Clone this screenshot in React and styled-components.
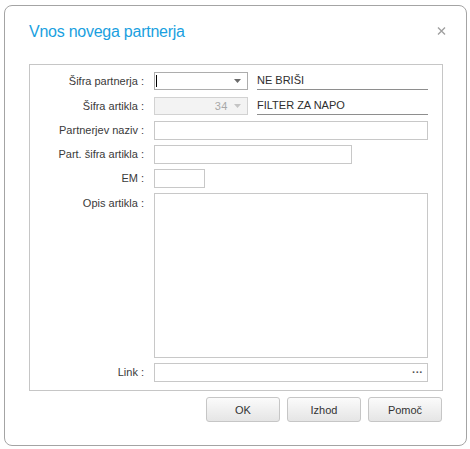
import styled, { createGlobalStyle } from 'styled-components';

const GlobalStyle = createGlobalStyle`
  html, body {
    margin: 0;
    background: #fff;
  }
  body {
    font-family: "Liberation Sans", Arial, sans-serif;
  }
`;

const Dialog = styled.div`
  box-sizing: border-box;
  width: 463px;
  height: 441px;
  margin: 5px 0 0 4px;
  padding: 0 23px 0 24px;
  border: 1px solid #a4a4a4;
  border-radius: 8px;
  background: #fff;
  display: flex;
  flex-direction: column;
`;

const Header = styled.div`
  display: flex;
  align-items: center;
  justify-content: space-between;
  padding-top: 16px;
  height: 20px;
  margin-bottom: 22px;
`;

const Title = styled.h1`
  margin: 0;
  font-size: 16px;
  line-height: 20px;
  font-weight: normal;
  letter-spacing: -0.25px;
  color: #1a9fe0;
`;

const Close = styled.svg`
  margin-right: -3px;
  margin-top: -2px;
`;

const Panel = styled.div`
  border: 1px solid #c6c6c6;
  padding: 7px 14px 8px 0;
  display: flex;
  flex-direction: column;
`;

const Row = styled.div`
  display: grid;
  grid-template-columns: 114px 1fr;
  column-gap: 10px;
  align-items: ${(p) => (p.$top ? 'start' : 'center')};
  margin-top: ${(p) => p.$mt || 0}px;
`;

const Label = styled.label`
  text-align: right;
  font-size: 11px;
  line-height: 13px;
  color: #3a3a3a;
  white-space: nowrap;
  padding-top: ${(p) => (p.$top ? 4 : 0)}px;
`;

const Field = styled.div`
  display: flex;
  align-items: flex-end;
`;

const Combo = styled.div`
  box-sizing: border-box;
  width: 94px;
  height: 18px;
  border: 1px solid ${(p) => (p.$disabled ? '#d2d2d2' : '#adadad')};
  background: ${(p) => (p.$disabled ? '#f3f3f3' : '#fff')};
  display: flex;
  align-items: center;
  padding: 0 6px 0 1px;
  font-size: 11px;
  color: #a8a8a8;
`;

const Caret = styled.span`
  width: 1px;
  height: 12px;
  background: #000;
`;

const ComboValue = styled.span`
  flex: 1;
  text-align: right;
  padding-right: 6px;
  letter-spacing: 0.5px;
`;

const Arrow = styled.svg`
  margin-left: auto;
  flex: none;
`;

const Display = styled.div`
  box-sizing: border-box;
  width: 171px;
  height: 18px;
  margin-left: 9px;
  padding-bottom: 2px;
  border-bottom: 1px solid #8e8e8e;
  display: flex;
  align-items: flex-end;
  font-size: 11px;
  line-height: 13px;
  color: #2e2e2e;
`;

const Input = styled.div`
  box-sizing: border-box;
  width: ${(p) => (p.$w ? `${p.$w}px` : '100%')};
  height: ${(p) => p.$h || 19}px;
  border: 1px solid #c8c8c8;
  background: #fff;
  display: flex;
  align-items: center;
  justify-content: flex-end;
  padding-right: 4px;
  font-size: 11px;
  line-height: 11px;
  font-weight: bold;
  color: #555;
`;

const Buttons = styled.div`
  display: flex;
  justify-content: flex-end;
  gap: 7px;
  margin: 6px 1px 0 0;
`;

const Button = styled.button`
  box-sizing: border-box;
  width: 74px;
  height: 25px;
  border: 1px solid #c6c6c6;
  border-radius: 3px;
  background: linear-gradient(#fbfbfb, #e5e5e5);
  font-family: "Liberation Sans", Arial, sans-serif;
  font-size: 11px;
  color: #333;
  padding: 0;
`;

function DropArrow({ color }) {
  return (
    <Arrow width="7" height="4" viewBox="0 0 7 4">
      <polygon points="0,0 7,0 3.5,4" fill={color} />
    </Arrow>
  );
}

export default function App() {
  return (
    <>
      <GlobalStyle />
      <Dialog>
        <Header>
          <Title>Vnos novega partnerja</Title>
          <Close width="9" height="8" viewBox="0 0 9 8">
            <path d="M1 0.5 L8 7.5 M8 0.5 L1 7.5" stroke="#a0a0a0" strokeWidth="1.4" />
          </Close>
        </Header>

        <Panel>
          <Row>
            <Label>Šifra partnerja :</Label>
            <Field>
              <Combo>
                <Caret />
                <DropArrow color="#6a6a6a" />
              </Combo>
              <Display>NE BRIŠI</Display>
            </Field>
          </Row>
          <Row $mt={7}>
            <Label>Šifra artikla :</Label>
            <Field>
              <Combo $disabled>
                <ComboValue>34</ComboValue>
                <DropArrow color="#c4c4c4" />
              </Combo>
              <Display>FILTER ZA NAPO</Display>
            </Field>
          </Row>
          <Row $mt={6}>
            <Label>Partnerjev naziv :</Label>
            <Input />
          </Row>
          <Row $mt={5}>
            <Label>Part. šifra artikla :</Label>
            <Input $w={198} />
          </Row>
          <Row $mt={5}>
            <Label>EM :</Label>
            <Input $w={51} />
          </Row>
          <Row $mt={5} $top>
            <Label $top>Opis artikla :</Label>
            <Input $h={165} />
          </Row>
          <Row $mt={5}>
            <Label>Link :</Label>
            <Input>···</Input>
          </Row>
        </Panel>

        <Buttons>
          <Button>OK</Button>
          <Button>Izhod</Button>
          <Button>Pomoč</Button>
        </Buttons>
      </Dialog>
    </>
  );
}
